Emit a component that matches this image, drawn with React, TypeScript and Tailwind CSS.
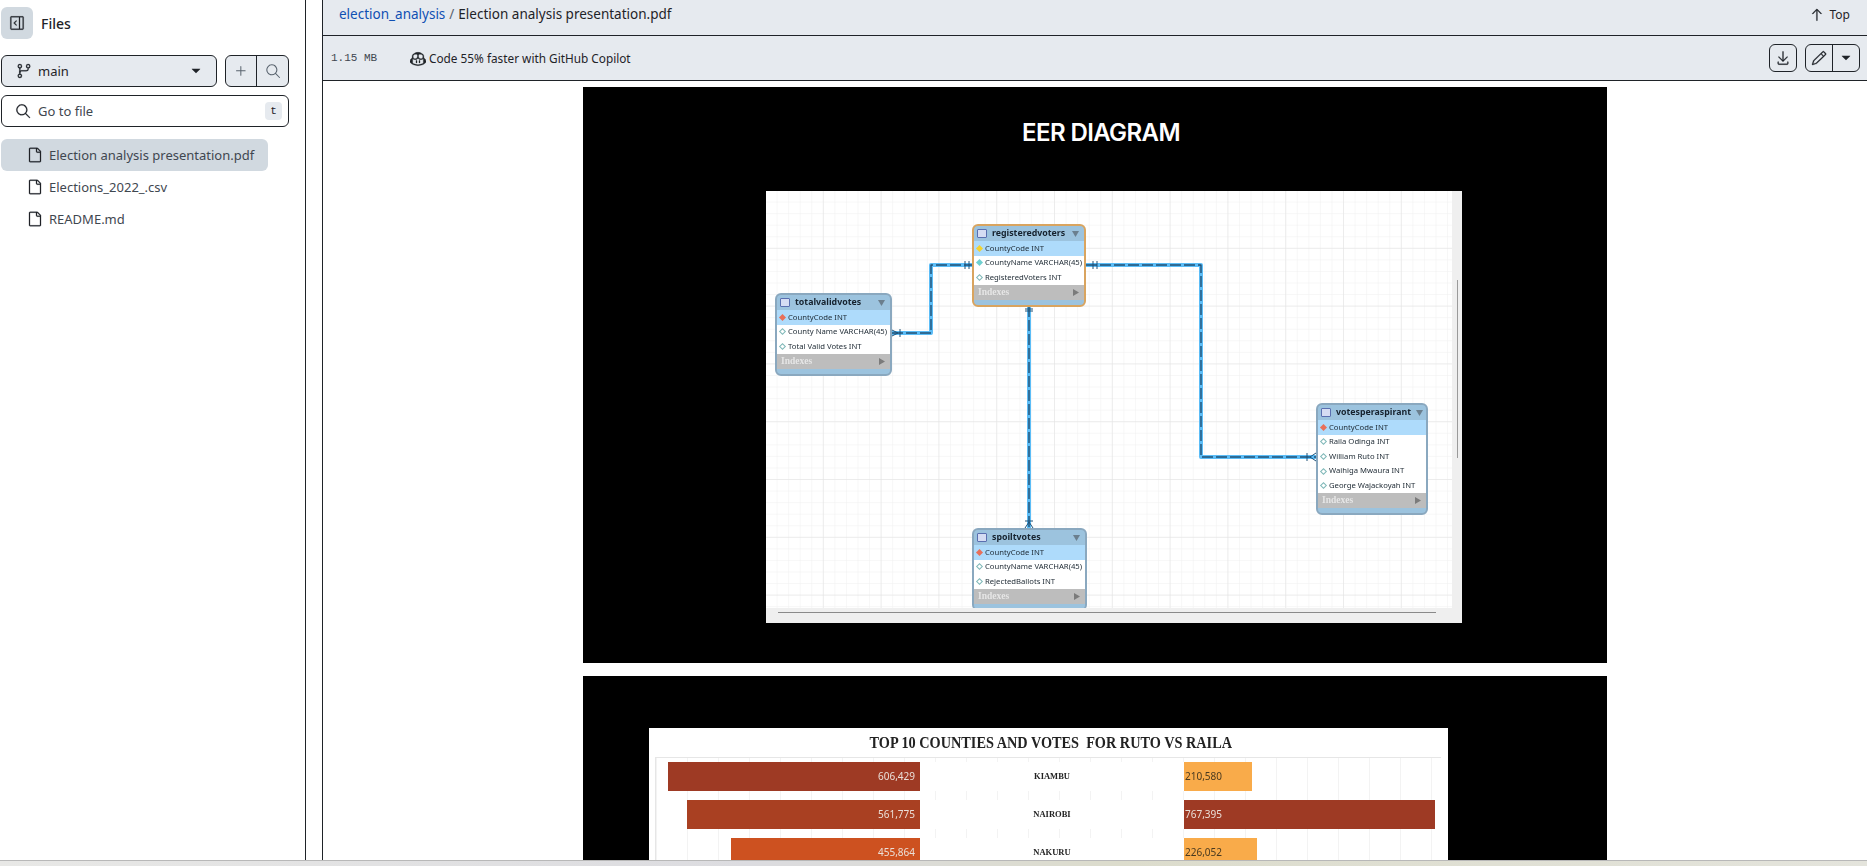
import {
  GoArrowUp,
  GoCopilot,
  GoDownload,
  GoFile,
  GoGitBranch,
  GoPencil,
  GoPlus,
  GoSearch,
  GoSidebarExpand,
  GoTriangleDown,
} from 'react-icons/go'

type Column = { label: string; dot: string }

const dots = {
  key: 'bg-[#f2d230]',
  red: 'bg-[#e8705a]',
  cyan: 'bg-[#6fd0d0]',
  open: 'bg-white border border-[#7fb8b8]',
}

const files = ['Election analysis presentation.pdf', 'Elections_2022_.csv', 'README.md']

function TableNode({ name, columns, position, selected }: { name: string; columns: Column[]; position: string; selected?: boolean }) {
  return (
    <div
      className={`absolute ${position} rounded-[6px] border-2 bg-[#9cc3de] ${selected ? 'border-[#d9a45f]' : 'border-[#8aa8bf]'} blur-[0.4px]`}
    >
      <div className="flex h-[15px] items-center gap-[5px] pl-[3px] pr-[5px] font-['Noto_Sans',sans-serif] text-[8.8px] font-bold text-[#16222e]">
        <span className="h-[9px] w-[10px] shrink-0 rounded-[1px] border border-[#5a6fb0] bg-[#d5dcf3]" />
        <span className="flex-1">{name}</span>
        <svg className="shrink-0" width="7" height="6" viewBox="0 0 7 6">
          <path d="M0 0h7L3.5 6z" fill="#6b7f8e" />
        </svg>
      </div>
      <div className="bg-white font-['Noto_Sans',sans-serif] text-[7.7px] text-[#1d2933]">
        {columns.map((c, i) => (
          <div key={c.label} className={`flex h-[14.6px] items-center gap-[3px] pl-[3px] ${i === 0 ? 'bg-[#aedbfb]' : ''}`}>
            <span className={`h-[5px] w-[5px] shrink-0 rotate-45 ${c.dot}`} />
            <span className="whitespace-nowrap">{c.label}</span>
          </div>
        ))}
      </div>
      <div className="flex h-[15px] items-center justify-between bg-[#bdbdbd] pl-[4px] pr-[5px] font-['Liberation_Serif',serif] text-[9.5px] font-bold text-[#e6e6e6]">
        <span>Indexes</span>
        <svg width="6" height="7" viewBox="0 0 6 7">
          <path d="M0 0l6 3.5L0 7z" fill="#7b7b7b" />
        </svg>
      </div>
      <div className="h-[5px]" />
    </div>
  )
}

function Diagram() {
  return (
    <div className="ml-[183px] mt-[42px] flex h-[432px] w-[696px] flex-col bg-[#efefef]">
      <div className="flex h-[417px]">
        <div className="relative w-[686px] overflow-hidden bg-white">
          <svg className="absolute inset-0" width="686" height="417">
            <defs>
              <pattern id="minor" width="11.56" height="11.56" patternUnits="userSpaceOnUse">
                <path d="M11.56 0V11.56H0" fill="none" stroke="#f0f0f0" strokeWidth="1" />
              </pattern>
              <pattern id="major" width="57.8" height="57.8" patternUnits="userSpaceOnUse" x="0" y="0">
                <path d="M57.8 0V57.8H0" fill="none" stroke="#e2e2e2" strokeWidth="1" />
              </pattern>
            </defs>
            <rect width="686" height="417" fill="url(#minor)" />
            <rect width="686" height="417" fill="url(#major)" />
            <g fill="none" strokeLinejoin="round" className="blur-[0.4px]">
              <path d="M126 142H165V74H206M320 74H435V266H550M263 115V337" stroke="#5cbdf7" strokeWidth="4" />
              <path d="M126 142H165V74H206M320 74H435V266H550M263 115V337" stroke="#1f5076" strokeWidth="1.4" strokeDasharray="11 3" />
              <path d="M134 138v8M199 70v8M203 70v8M327 70v8M331 70v8M541 262v8M259 120h8M259 118h8M259 330h8M126 139l6 3l-6 3M550 262l-6 4l6 4M259 337l4-6l4 6" stroke="#1f5076" strokeWidth="1" />
            </g>
          </svg>
          <TableNode
            name="registeredvoters"
            position="left-[206px] top-[33px] w-[114px]"
            selected
            columns={[
              { label: 'CountyCode INT', dot: dots.key },
              { label: 'CountyName VARCHAR(45)', dot: dots.cyan },
              { label: 'RegisteredVoters INT', dot: dots.open },
            ]}
          />
          <TableNode
            name="totalvalidvotes"
            position="left-[9px] top-[102px] w-[117px]"
            columns={[
              { label: 'CountyCode INT', dot: dots.red },
              { label: 'County Name VARCHAR(45)', dot: dots.open },
              { label: 'Total Valid Votes INT', dot: dots.open },
            ]}
          />
          <TableNode
            name="votesperaspirant"
            position="left-[550px] top-[212px] w-[112px]"
            columns={[
              { label: 'CountyCode INT', dot: dots.red },
              { label: 'Raila Odinga INT', dot: dots.open },
              { label: 'William Ruto INT', dot: dots.open },
              { label: 'Waihiga Mwaura INT', dot: dots.open },
              { label: 'George Wajackoyah INT', dot: dots.open },
            ]}
          />
          <TableNode
            name="spoiltvotes"
            position="left-[206px] top-[337px] w-[115px]"
            columns={[
              { label: 'CountyCode INT', dot: dots.red },
              { label: 'CountyName VARCHAR(45)', dot: dots.open },
              { label: 'RejectedBallots INT', dot: dots.open },
            ]}
          />
        </div>
        <div className="w-[10px] pl-[5px] pt-[89px]">
          <div className="h-[178px] w-[1px] bg-[#9a9a9a]" />
        </div>
      </div>
      <div className="pl-[12px] pt-[4px]">
        <div className="h-[1px] w-[658px] bg-[#8a8a8a]" />
      </div>
    </div>
  )
}

function ChartRow({ left, leftBar, label, right, rightBar }: { left: string; leftBar: string; label: string; right: string; rightBar: string }) {
  return (
    <div className="flex h-[29px] items-stretch blur-[0.3px]">
      <div className="flex w-[264px] justify-end">
        <div className={`flex items-center justify-end pr-[5px] font-['Noto_Sans',sans-serif] text-[10px] text-[#eadfd8] ${leftBar}`}>{left}</div>
      </div>
      <div className="flex w-[264px] items-center justify-center bg-white pb-[1px] font-['Liberation_Serif',serif] text-[8.5px] font-bold text-[#222]">{label}</div>
      <div className={`flex items-center pl-[1px] font-['Noto_Sans',sans-serif] text-[10px] ${rightBar}`}>{right}</div>
    </div>
  )
}

function Chart() {
  return (
    <div className="ml-[66px] mt-[52px] w-[799px] bg-white pl-[6px] pr-[7px] font-['Liberation_Sans',sans-serif]">
      <div className="flex h-[29px] items-center justify-center pl-[6px]">
        <span className="inline-block scale-x-[0.84] whitespace-nowrap font-['Liberation_Serif',serif] text-[17px] font-bold text-[#222]">
          TOP 10 COUNTIES AND VOTES&nbsp; FOR RUTO VS RAILA
        </span>
      </div>
      <div className="flex flex-col gap-[9px] border-l border-t border-[#e6e6e6] bg-[linear-gradient(to_right,#f3f3f3_1px,transparent_1px)] bg-[size:31px_100%] pt-[4px]">
        <ChartRow left="606,429" leftBar="w-[252px] bg-[#9e3a24]" label="KIAMBU" right="210,580" rightBar="w-[68px] bg-[#f9ab4a] text-[#4a3a20]" />
        <ChartRow left="561,775" leftBar="w-[233px] bg-[#a94022]" label="NAIROBI" right="767,395" rightBar="w-[251px] bg-[#9e3a24] text-[#eadfd8]" />
        <ChartRow left="455,864" leftBar="w-[189px] bg-[#cd5120]" label="NAKURU" right="226,052" rightBar="w-[73px] bg-[#f9ab4a] text-[#4a3a20]" />
      </div>
    </div>
  )
}

export default function App() {
  return (
    <div className="flex h-screen flex-col overflow-hidden bg-white font-['Noto_Sans',sans-serif] text-[13.5px] text-[#1f2328]">
      <div className="flex min-h-0 flex-1">
        {/* arvore de arquivos */}
        <aside className="w-[306px] shrink-0 border-r border-[#1f2328] pl-[1px]">
          <div className="flex h-[46px] items-center gap-[8px]">
            <button className="flex h-[32px] w-[32px] items-center justify-center rounded-md bg-[#d1d9e0]">
              <GoSidebarExpand className="h-[16px] w-[16px] stroke-[0.4px]" />
            </button>
            <span className="text-[14px] font-medium">Files</span>
          </div>
          <div className="mt-[9px] flex w-[288px] gap-[8px] text-[13px]">
            <button className="flex h-[32px] w-[216px] items-center rounded-md border border-[#1f2328] bg-[#e6eaef] pl-[14px] pr-[12px]">
              <GoGitBranch className="mr-[6px] h-[16px] w-[16px] stroke-[0.4px]" />
              <span className="flex-1 pt-[1px] text-left">main</span>
              <GoTriangleDown className="h-[16px] w-[16px]" />
            </button>
            <div className="flex h-[32px] w-[64px] rounded-md border border-[#1f2328] bg-[#e6eaef] text-[#59636e]">
              <span className="flex w-[31px] items-center justify-center border-r border-[#1f2328]">
                <GoPlus className="h-[16px] w-[16px]" />
              </span>
              <span className="flex flex-1 items-center justify-center">
                <GoSearch className="h-[16px] w-[16px]" />
              </span>
            </div>
          </div>
          <div className="mt-[8px] flex h-[32px] w-[288px] items-center rounded-md border border-[#1f2328] pl-[13px] pr-[6px] text-[13px]">
            <GoSearch className="mr-[7px] h-[16px] w-[16px] stroke-[0.4px]" />
            <span className="flex-1 pt-[1px] text-[#3f4750]">Go to file</span>
            <span className="flex h-[18px] w-[17px] items-center justify-center rounded bg-[#e6eaef] font-['Liberation_Mono',monospace] text-[11px]">t</span>
          </div>
          <ul className="mt-[12px] w-[267px]">
            {files.map((f, i) => (
              <li key={f} className={`flex h-[32px] items-center rounded-md pl-[26px] text-[13px] text-[#3f4750] ${i === 0 ? 'bg-[#d1d9e0]' : ''}`}>
                <GoFile className="mr-[6px] h-[16px] w-[16px] shrink-0 stroke-[0.4px] text-[#1f2328]" />
                <span className="whitespace-nowrap pt-[1px]">{f}</span>
              </li>
            ))}
          </ul>
        </aside>

        <div className="w-[16px] shrink-0" />

        <main className="flex min-w-0 flex-1 flex-col border-l border-[#1f2328]">
          <div className="flex h-[36px] shrink-0 items-center justify-between border-b border-[#1f2328] bg-[#e6eaef] pb-[6px] pl-[16px] pr-[17px]">
            <div>
              <a className="text-[#0f4fb3]">election_analysis</a>
              <span className="mx-[4px] text-[#59636e]">/</span>
              <span>Election analysis presentation.pdf</span>
            </div>
            <div className="flex items-center gap-[5px] text-[12px]">
              <GoArrowUp className="h-[16px] w-[16px] stroke-[0.4px]" />
              Top
            </div>
          </div>
          <div className="flex h-[45px] shrink-0 items-center justify-between border-b border-[#1f2328] bg-[#e6eaef] pl-[8px] pr-[7px]">
            <div className="flex items-center pt-[1px] text-[11.8px]">
              <span className="w-[79px] font-['Liberation_Mono',monospace] text-[11px] text-[#3f4750]">1.15 MB</span>
              <GoCopilot className="mr-[3px] h-[16px] w-[16px] stroke-[0.5px]" />
              Code 55% faster with GitHub Copilot
            </div>
            <div className="flex items-center gap-[8px]">
              <button className="flex h-[28px] w-[28px] items-center justify-center rounded-md border border-[#1f2328]">
                <GoDownload className="h-[16px] w-[16px] stroke-[0.4px]" />
              </button>
              <div className="flex h-[28px] w-[55px] rounded-md border border-[#1f2328]">
                <span className="flex w-[27px] items-center justify-center border-r border-[#1f2328]">
                  <GoPencil className="h-[16px] w-[16px] stroke-[0.4px]" />
                </span>
                <span className="flex flex-1 items-center justify-center">
                  <GoTriangleDown className="h-[16px] w-[16px]" />
                </span>
              </div>
            </div>
          </div>

          <div className="min-h-0 flex-1 overflow-hidden">
            <div className="mx-auto mt-[6px] flex w-[1024px] flex-col gap-[13px]">
              <section className="h-[576px] bg-black pt-[30px]">
                <h1 className="pl-[12px] text-center font-['Inter',sans-serif] text-[24px] font-semibold leading-[32px] tracking-tight text-white">EER DIAGRAM</h1>
                <Diagram />
              </section>
              <section className="h-[400px] overflow-hidden bg-black pt-[0.1px]">
                <Chart />
              </section>
            </div>
          </div>
        </main>
      </div>
      <div className="h-[6px] shrink-0 border-t border-[#b8b8b8] bg-[linear-gradient(to_right,#e8e8e6,#dcdce0_40%,#dcdccc_60%,#e4e4dc)]" />
    </div>
  )
}
